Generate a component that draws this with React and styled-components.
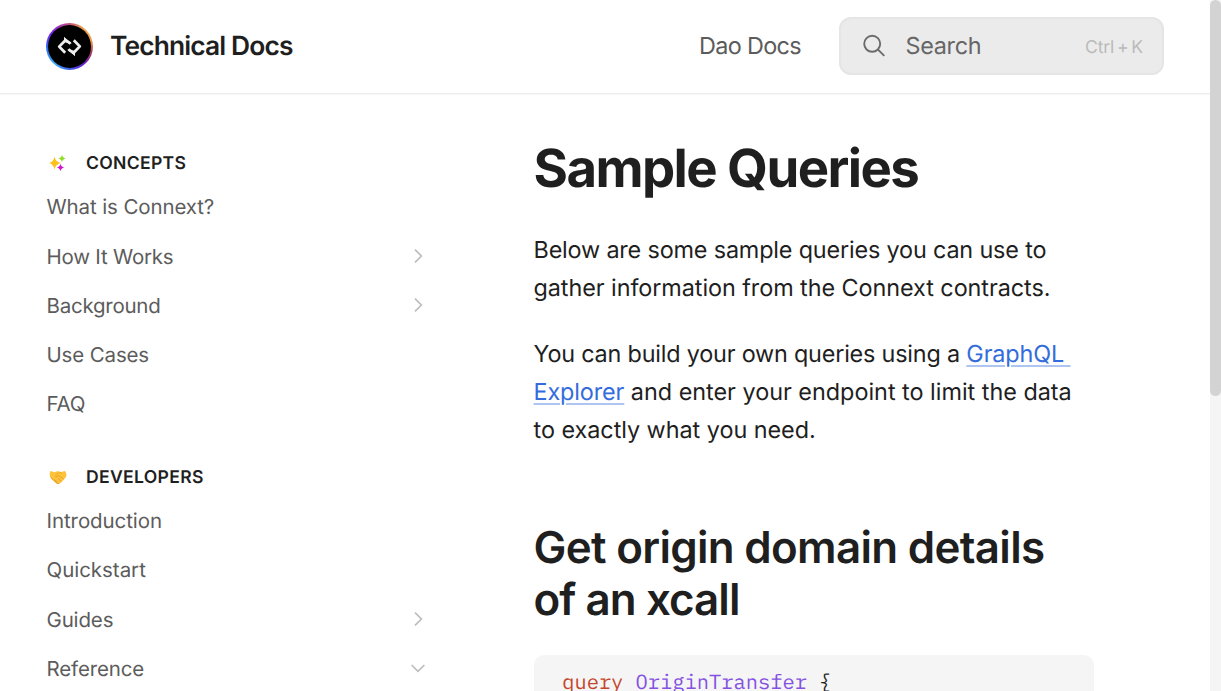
import React from 'react';
import styled, { createGlobalStyle } from 'styled-components';

const Global = createGlobalStyle`
  * { box-sizing: border-box; }
  html, body { margin: 0; height: 100%; overflow: hidden; }
  body {
    background: #fff;
    color: #1f1f1f;
    font-family: Inter, "Liberation Sans", sans-serif;
    text-rendering: geometricPrecision;
  }
  a { color: inherit; text-decoration: none; }
`;

const Window = styled.div`
  display: flex;
  height: 691px;
  width: 1221px;
  overflow: hidden;
`;
const Page = styled.div`
  width: 1210px;
  height: 691px;
  overflow: hidden;
`;
const ScrollTrack = styled.div`
  width: 11px;
  background: #f5f5f5;
`;
const ScrollThumb = styled.div`
  height: 396px;
  border-radius: 6px;
  background: #d3d3d3;
`;

const Header = styled.header`
  display: flex;
  align-items: center;
  height: 94px;
  margin-bottom: 1px;
  padding: 0 46px;
  padding-bottom: 2px;
  border-bottom: 1px solid #efefef;
  box-shadow: 0 1px #f7f7f7;
`;
const Brand = styled.a`
  display: flex;
  align-items: center;
  gap: 17px;
  font-size: 26.4px;
  font-weight: 600;
  letter-spacing: -0.88px;
  line-height: 36px;
`;
const LogoRing = styled.span`
  display: grid;
  place-items: center;
  width: 47px;
  height: 47px;
  margin-top: 1px;
  border-radius: 50%;
  background: conic-gradient(#c5527a 0deg, #e8a050 35deg, #eea14e 75deg, #a23a50 105deg, #6a20d8 140deg, #3c5ce8 180deg, #3eb0f4 220deg, #2d6ff0 265deg, #7a1cf0 305deg, #c5527a 360deg);
`;
const HeaderLink = styled.a`
  margin-left: auto;
  margin-right: 38px;
  color: #5c5c5c;
  font-size: 23.4px;
  letter-spacing: -0.65px;
  line-height: 36px;
`;
const Search = styled.div`
  display: flex;
  align-items: center;
  width: 325px;
  height: 58px;
  margin-top: 1px;
  padding: 0 19px 0 21px;
  border: 2px solid #e5e5e5;
  border-radius: 12px;
  background: #ebebeb;
  color: #666;
  font-size: 23.4px;
  letter-spacing: -0.3px;
`;
const SearchLabel = styled.span`
  margin: 0 0 2px 19.5px;
`;
const Shortcut = styled.span`
  margin-left: auto;
  color: #bababa;
  font-size: 17.6px;
  word-spacing: -2px;
  letter-spacing: -0.15px;
  margin-top: 2px;
`;

const Columns = styled.div`
  display: flex;
`;
const Sidebar = styled.nav`
  width: 533px;
  padding: 48.9px 99px 0 46.5px;
`;
const Group = styled.section`
  margin-bottom: 29.6px;
`;
const GroupTitle = styled.h2`
  display: flex;
  align-items: center;
  gap: 19px;
  height: 38.4px;
  margin: 0;
  font-size: 17.6px;
  font-weight: 600;
  letter-spacing: 0.3px;
`;
const GroupIcon = styled.svg`
  width: 18px;
  height: 18px;
  margin: 0 0 0 2.5px;
`;
const Item = styled.a`
  display: flex;
  align-items: center;
  justify-content: space-between;
  height: 49.2px;
  padding-right: 5px;
  color: #5c5c5c;
  font-size: 20.5px;
  letter-spacing: ${(p) => p.$tracking}px;
`;
const Chevron = styled.svg`
  width: 22px;
  height: 22px;
  fill: none;
  stroke: #bcbcbc;
  stroke-width: 1.6;
  transform: ${(p) => (p.$open ? 'rotate(90deg)' : 'none')};
`;

const Article = styled.main`
  width: 562px;
  padding: 41px 0 0;
  margin-left: 0.5px;
`;
const Title = styled.h1`
  margin: 0 0 30px;
  font-size: 52.7px;
  font-weight: 700;
  line-height: 65px;
  letter-spacing: -1.57px;
`;
const Paragraph = styled.p`
  margin: 0 0 28px;
  font-size: 23.4px;
  line-height: 38px;
  white-space: nowrap;
`;
const Run = styled.span`
  letter-spacing: ${(p) => p.$tracking}px;
`;
const TextLink = styled.a`
  color: #346ddb;
  letter-spacing: -0.12px;
  text-decoration: underline;
  text-decoration-color: #aec5f1;
  text-decoration-thickness: 2px;
  text-underline-offset: 3px;
`;
const Subtitle = styled.h2`
  margin: 72px 0 30px;
  font-size: 43.9px;
  font-weight: 600;
  line-height: 52px;
`;
const Code = styled.pre`
  width: 560px;
  height: 120px;
  margin: 0;
  padding: 11px 28px 11px 28.7px;
  border-radius: 10px;
  background: #f5f5f5;
  font-family: "IBM Plex Mono", "Liberation Mono", monospace;
  font-size: 20.4px;
  line-height: 32px;
`;
const Token = styled.span`
  color: ${(p) => p.$color};
`;

const Logo = () => (
  <LogoRing>
    <svg width="43" height="43" viewBox="0 0 43 43" fill="none">
      <circle cx="21.5" cy="21.5" r="21.5" fill="#000" />
      <g stroke="#eee" strokeWidth="2.8" strokeLinejoin="round">
        <path d="M17.2 27.8 L11.2 21.6 L17.4 15.2 L22.6 18.6" />
        <path d="M25.8 15.2 L31.8 21.4 L25.6 27.8 L20.4 24.4" />
      </g>
      <path d="M16 11.8 L23.8 18.8 L16 17 Z M27 31.2 L19.2 24.2 L27 26 Z" fill="#eee" />
    </svg>
  </LogoRing>
);

const Sparkles = () => (
  <GroupIcon viewBox="0 0 18 18">
    <path d="M5.5 2.5 Q6.5 8 12 9 Q6.5 10 5.5 15.5 Q4.5 10 0 9 Q4.5 8 5.5 2.5Z" fill="#fcc21b" />
    <path d="M13 0.8 Q13.6 4 16.7 4.5 Q13.6 5 13 8 Q12.4 5 9.3 4.5 Q12.4 4 13 .8Z" fill="#8fdc25" />
    <path d="M11.5 9.8 Q12.2 13 15.2 13.5 Q12.2 14 11.5 17.2 Q10.8 14 7.8 13.5 Q10.8 13 11.5 9.8Z" fill="#cb19ce" />
  </GroupIcon>
);

const Handshake = () => (
  <GroupIcon viewBox="0 0 18 18">
    <path d="M1.5 3 L5.5 4.2 Q9 2.4 12 4 L16 3 Q18.3 6 16.8 9.2 L12 14.8 Q9 17 6.8 15 L2 10.5 Q-0.4 7 1.5 3Z" fill="#fdc33a" />
    <path d="M2 9.6 L7 14.5 Q9 16 10.3 15.5 M6.5 9 Q8.5 9 9.5 7.5 L14.5 11 M5 11.5 L8.5 14 M9 10.5 L12 13" fill="none" stroke="#e09126" strokeWidth="0.7" />
    <path d="M6 8.4 L8.8 5 Q11 4.2 13 5.3" fill="none" stroke="#eda22b" strokeWidth="0.7" />
  </GroupIcon>
);

const SearchIcon = () => (
  <svg width="24" height="24" viewBox="0 0 24 24" fill="none" stroke="#6b6b6b" strokeWidth="1.9">
    <circle cx="10.2" cy="9.8" r="8" />
    <path d="M16 15.6 L22.3 21.9" />
  </svg>
);

const Row = ({ label, tracking, arrow, open }) => (
  <Item href="#" $tracking={tracking}>
    {label}
    {arrow && (
      <Chevron $open={open} viewBox="0 0 22 22">
        <path d="M8 4.6 L14.4 11 L8 17.4" />
      </Chevron>
    )}
  </Item>
);

export default function App() {
  return (
    <>
      <Global />
      <Window>
        <Page>
          <Header>
            <Brand href="#"><Logo />Technical Docs</Brand>
            <HeaderLink href="#">Dao Docs</HeaderLink>
            <Search>
              <SearchIcon />
              <SearchLabel>Search</SearchLabel>
              <Shortcut>Ctrl + K</Shortcut>
            </Search>
          </Header>
          <Columns>
            <Sidebar>
              <Group>
                <GroupTitle><Sparkles />CONCEPTS</GroupTitle>
                <Row label="What is Connext?" tracking={-0.12} />
                <Row label="How It Works" tracking={-0.22} arrow />
                <Row label="Background" tracking={-0.25} arrow />
                <Row label="Use Cases" tracking={-0.15} />
                <Row label="FAQ" tracking={-0.25} />
              </Group>
              <Group>
                <GroupTitle><Handshake />DEVELOPERS</GroupTitle>
                <Row label="Introduction" tracking={-0.08} />
                <Row label="Quickstart" tracking={-0.03} />
                <Row label="Guides" tracking={-0.15} arrow />
                <Row label="Reference" tracking={-0.15} arrow open />
              </Group>
            </Sidebar>
            <Article>
              <Title>Sample Queries</Title>
              <Paragraph>
                <Run $tracking={-0.17}>Below are some sample queries you can use to</Run><br />
                <Run $tracking={-0.065}>gather information from the Connext contracts.</Run>
              </Paragraph>
              <Paragraph>
                <Run $tracking={-0.2}>You can build your own queries using a </Run>
                <TextLink href="#">GraphQL&nbsp;<br />Explorer</TextLink>
                <Run $tracking={-0.01}> and enter your endpoint to limit the data</Run><br />
                <Run $tracking={-0.04}>to exactly what you need.</Run>
              </Paragraph>
              <Subtitle>
                <Run $tracking={-0.68}>Get origin domain details</Run><br />
                <Run $tracking={-0.93}>of an xcall</Run>
              </Subtitle>
              <Code>
                <Token $color="#c4462d">query</Token> <Token $color="#8451e1">OriginTransfer</Token>{' {'}
              </Code>
            </Article>
          </Columns>
        </Page>
        <ScrollTrack><ScrollThumb /></ScrollTrack>
      </Window>
    </>
  );
}
